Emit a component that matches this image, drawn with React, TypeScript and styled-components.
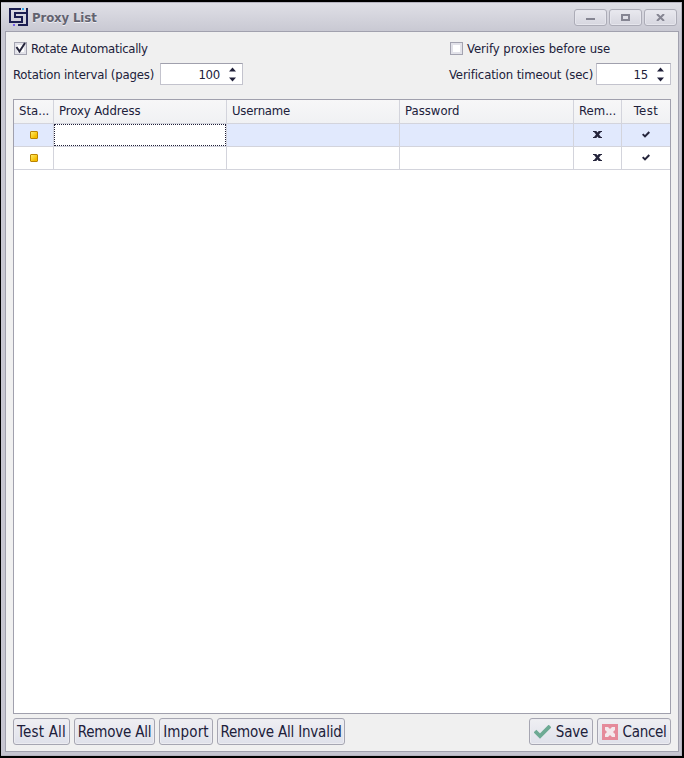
import React from "react";
import styled, { createGlobalStyle } from "styled-components";

const GlobalStyle = createGlobalStyle`
  * { box-sizing: border-box; }
  body { margin: 0; background: #000; }
`;

const Screen = styled.div`
  width: 684px;
  height: 758px;
  padding: 2px 2px 2px 1px;
  background: #000;
  color: #20203a;
  font: 13px "DejaVu Sans Condensed", "DejaVu Sans", sans-serif;
  font-stretch: condensed;
`;

const Window = styled.div`
  display: flex;
  flex-direction: column;
  height: 754px;
  padding: 0 2px 3px 4px;
  border: 1px solid #b6b4c0;
  border-width: 1px 1px 1px 0;
  background: linear-gradient(#dfdfe6, #c9c9d3 28px, #c6c5d0);
`;

const TitleBar = styled.header`
  display: flex;
  align-items: center;
  height: 28px;
  padding: 0 2px 0 4px;
`;

const Title = styled.h1<{ $spacing: number }>`
  flex: 1;
  margin: 2px 0 0 4px;
  color: #62626f;
  font-size: 13px;
  line-height: 18px;
  letter-spacing: ${(p) => p.$spacing}px;
  text-shadow: 0 1px 0 #eeeef3;
`;

const WindowButton = styled.button`
  display: flex;
  align-items: center;
  justify-content: center;
  width: 33px;
  height: 17px;
  margin-left: 2px;
  padding: 0;
  border: 1px solid #acacb7;
  border-radius: 3px;
  background: linear-gradient(#e9e9ef, #d6d6df);
  box-shadow: inset 0 0 0 1px #e6e6ed;
`;

const Content = styled.main`
  flex: 1;
  display: flex;
  flex-direction: column;
  padding: 6px 7px 6px;
  border: 1px solid #a1a1ae;
  background: #f0f0f0;
`;

const Options = styled.section`
  display: flex;
  justify-content: space-between;
  height: 61px;
`;

const OptionGroup = styled.div<{ $width: number }>`
  width: ${(p) => p.$width}px;
`;

const OptionRow = styled.label<{ $height: number }>`
  display: flex;
  align-items: center;
  justify-content: space-between;
  height: ${(p) => p.$height}px;
`;

const CheckRow = styled(OptionRow)`
  justify-content: flex-start;
  gap: 4px;
  padding-left: 1px;
`;

const Text = styled.span<{ $spacing?: number }>`
  white-space: nowrap;
  line-height: 18px;
  letter-spacing: ${(p) => p.$spacing ?? 0}px;
`;

const HeaderText = styled(Text)`
  margin-bottom: 2px;
`;

const FieldText = styled(Text)`
  margin-top: 2px;
`;

const CheckBox = styled.span`
  display: flex;
  width: 13px;
  height: 13px;
  margin-bottom: 1px;
  border: 1px solid #a3a3b0;
  background: #fff;
  box-shadow: inset 0 0 0 2px #e2e2e9;

  svg { overflow: visible; }
`;

const Spinner = styled.span<{ $width: number }>`
  display: flex;
  align-items: center;
  justify-content: flex-end;
  gap: 9px;
  width: ${(p) => p.$width}px;
  height: 22px;
  padding: 1px 6px 0 0;
  border: 1px solid #c3c3cd;
  border-top-color: #a0a0ad;
  background: #fff;
`;

const Grid = styled.div`
  flex: 1;
  width: 658px;
  border: 1px solid #a0a0ad;
  background: #fff;
`;

const GridRow = styled.div<{ $kind?: "header" | "selected" }>`
  display: grid;
  grid-template-columns: 40px 173px 173px 174px 48px 48px;
  height: ${(p) => (p.$kind === "header" ? 24 : 23)}px;
  background: ${(p) =>
    p.$kind === "header"
      ? "linear-gradient(#f7f7f8, #f0f1f3)"
      : p.$kind === "selected"
        ? "#e1e9fd"
        : "#fff"};
`;

const Cell = styled.div<{ $center?: boolean }>`
  display: flex;
  align-items: center;
  justify-content: ${(p) => (p.$center ? "center" : "flex-start")};
  min-width: 0;
  padding-left: ${(p) => (p.$center ? 0 : 5)}px;
  border-right: 1px solid #d3d4dc;
  border-bottom: 1px solid #d3d4dc;

  &:last-child { border-right: 0; }
`;

const AddressCell = styled(Cell)<{ $focused: boolean }>`
  align-items: stretch;
  padding: 0;

  &::before {
    content: "";
    flex: 1;
    background: ${(p) => (p.$focused ? "#fff" : "transparent")};
    border: ${(p) => (p.$focused ? "1px dotted #20203a" : "none")};
  }
`;

const StatusLight = styled.i`
  width: 8px;
  height: 8px;
  border: 1px solid #bc8400;
  border-radius: 1px;
  background: linear-gradient(135deg, #ffec68, #f5bd00 75%);
`;

const Footer = styled.footer`
  display: flex;
  gap: 4px;
  padding-top: 4px;
`;

const Button = styled.button<{ $width: number; $right?: boolean }>`
  display: flex;
  align-items: center;
  justify-content: center;
  gap: 5px;
  width: ${(p) => p.$width}px;
  height: 27px;
  margin-left: ${(p) => (p.$right ? "auto" : "0")};
  padding: 0;
  border: 1px solid #a6a6b2;
  border-radius: 3px;
  color: #20203a;
  background: linear-gradient(#efeff3, #dfe1ea);
  box-shadow: inset 0 0 0 1px #ececf1;
  font: inherit;
  font-size: 15px;
`;

const Logo = () => (
  <svg width="19" height="20" viewBox="0 0 19 20" fill="none">
    <path d="M12 2H1v13h12v-5H6V6h9" stroke="#1c1e50" strokeWidth="2" />
    <path d="M18 1v17H9" stroke="#1c1e50" strokeWidth="2" />
    <path d="M15 5h3v2h-3z" fill="#1c1e50" />
    <path d="M13 1h2v2h-2z" fill="#32a4ed" />
    <path d="M4 17h2v2H4z" fill="#735bea" />
  </svg>
);

const Arrows = () => (
  <svg width="7" height="15" viewBox="0 0 7 15" fill="#20203a">
    <path d="M0 4.5 3.5.5 7 4.5zM0 10.5l3.5 4 3.5-4z" />
  </svg>
);

const Cross = () => (
  <svg width="9" height="8" viewBox="0 0 9 8" fill="#24243b">
    <path d="M0 0h3.3l1.2 1.6L5.7 0H9v1H8L6 3.5 8 6h1v1H5.7L4.5 5.4 3.3 7H0V6h1l2-2.5L1 1H0z" />
  </svg>
);

const Tick = () => (
  <svg width="8" height="8" viewBox="0 0 8 8" fill="none" stroke="#24243b" strokeWidth="2">
    <path d="m.7 3.1 2.3 2.3L7.3 1" />
  </svg>
);

const columns = [
  { title: "Sta...", spacing: 0 },
  { title: "Proxy Address", spacing: -0.05 },
  { title: "Username", spacing: -0.2 },
  { title: "Password", spacing: 0 },
  { title: "Rem...", spacing: 0 },
  { title: "Test", spacing: 0.4 },
];

const ProxyRow = ({ selected = false }: { selected?: boolean }) => (
  <GridRow $kind={selected ? "selected" : undefined}>
    <Cell $center><StatusLight /></Cell>
    <AddressCell $focused={selected} />
    <Cell />
    <Cell />
    <Cell $center><Cross /></Cell>
    <Cell $center><Tick /></Cell>
  </GridRow>
);

export default function App() {
  return (
    <>
      <GlobalStyle />
      <Screen>
        <Window>
          <TitleBar>
            <Logo />
            <Title $spacing={-0.1}>Proxy List</Title>
            <WindowButton aria-label="Minimize">
              <svg width="9" height="7"><path d="M0 4h9v2H0z" fill="#858592" /></svg>
            </WindowButton>
            <WindowButton aria-label="Maximize">
              <svg width="9" height="7"><path d="M1 1h7v5H1z" fill="none" stroke="#858592" strokeWidth="2" /></svg>
            </WindowButton>
            <WindowButton aria-label="Close">
              <svg width="9" height="7"><path d="m1 0 7 7M8 0 1 7" stroke="#858592" strokeWidth="2" /></svg>
            </WindowButton>
          </TitleBar>
          <Content>
            <Options>
              <OptionGroup $width={230}>
                <CheckRow $height={22}>
                  <CheckBox>
                    <svg width="11" height="11"><path d="m1.5 4 3 4.5L10 0" fill="none" stroke="#24243b" strokeWidth="2" /></svg>
                  </CheckBox>
                  <Text $spacing={-0.29}>Rotate Automatically</Text>
                </CheckRow>
                <OptionRow $height={28}>
                  <FieldText $spacing={-0.17}>Rotation interval (pages)</FieldText>
                  <Spinner $width={83}><Text $spacing={-0.25}>100</Text><Arrows /></Spinner>
                </OptionRow>
              </OptionGroup>
              <OptionGroup $width={222}>
                <CheckRow $height={22}>
                  <CheckBox />
                  <Text $spacing={-0.06}>Verify proxies before use</Text>
                </CheckRow>
                <OptionRow $height={28}>
                  <FieldText $spacing={-0.13}>Verification timeout (sec)</FieldText>
                  <Spinner $width={75}><Text $spacing={-0.2}>15</Text><Arrows /></Spinner>
                </OptionRow>
              </OptionGroup>
            </Options>
            <Grid>
              <GridRow $kind="header">
                {columns.map((c) => (
                  <Cell key={c.title} $center={c.title === "Test"}>
                    <HeaderText $spacing={c.spacing}>{c.title}</HeaderText>
                  </Cell>
                ))}
              </GridRow>
              <ProxyRow selected />
              <ProxyRow />
            </Grid>
            <Footer>
              <Button $width={57}><Text $spacing={0.2}>Test All</Text></Button>
              <Button $width={81}><Text $spacing={-0.2}>Remove All</Text></Button>
              <Button $width={54}><Text $spacing={0.1}>Import</Text></Button>
              <Button $width={128}><Text $spacing={-0.2}>Remove All Invalid</Text></Button>
              <Button $width={64} $right>
                <svg width="17" height="14" viewBox="0 0 17 14"><path d="m1 6 5 5L16 1" fill="none" stroke="#6daa94" strokeWidth="3.8" /></svg>
                <Text $spacing={-0.2}>Save</Text>
              </Button>
              <Button $width={74}>
                <svg width="16" height="16" viewBox="0 0 16 16">
                  <path d="M0 0h16v16H0z" fill="#e58b9b" />
                  <path d="M3 3h3l2 2 2-2h3v3l-2 2 2 2v3h-3l-2-2-2 2H3v-3l2-2-2-2z" fill="#f4e8ec" />
                </svg>
                <Text $spacing={-0.3}>Cancel</Text>
              </Button>
            </Footer>
          </Content>
        </Window>
      </Screen>
    </>
  );
}
